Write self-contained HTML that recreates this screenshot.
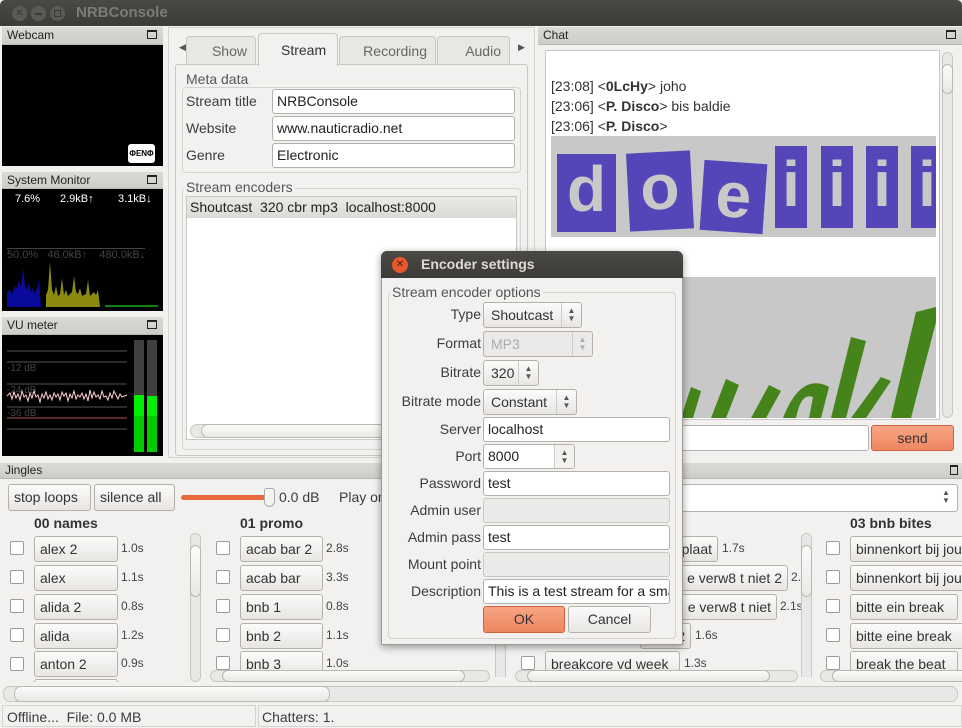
<!DOCTYPE html>
<html><head><meta charset="utf-8"><style>
*{box-sizing:border-box;margin:0;padding:0}
body{width:962px;height:728px;overflow:hidden;background:#f2f1f0;font-family:"Liberation Sans","DejaVu Sans",sans-serif;font-size:14px;color:#3c3c3c;position:relative}
.a{position:absolute}
.hdr{position:absolute;background:linear-gradient(#dcdad6,#cfcdc9);font-size:12px;color:#222;padding:1px 5px;border-bottom:1px solid #b9b7b3}
.hdr i{position:absolute;right:6px;top:3px;width:10px;height:9px;border:1px solid #222;border-top-width:2px}
.blk{position:absolute;background:#000}
.ent{position:absolute;background:#fff;border:1px solid #b4b1ac;border-radius:3px;padding:3px 4px;font-size:14px;color:#222;white-space:nowrap;overflow:hidden;height:25px}
.dis{background:#ebeae8;border-color:#c9c7c3}
.btn{position:absolute;background:linear-gradient(#fbfbfa,#e8e6e3);border:1px solid #b4b1ac;border-radius:3px;font-size:14px;color:#333;white-space:nowrap;overflow:hidden;padding:4px 5px;height:26px}
.lbl{position:absolute;font-size:14px;color:#3c3c3c;text-align:right;white-space:nowrap}
.cb{position:absolute;width:14px;height:14px;border:1px solid #9e9b97;border-radius:2px;background:#fff}
.t{position:absolute;font-size:12px;color:#444}
.sp{position:absolute;right:0;top:0;bottom:0;width:20px;border-left:1px solid #ccc;font-size:8px;line-height:8px;text-align:center;color:#555;padding-top:4px}
.vs{position:absolute;width:11px;border:1px solid #c9c7c3;border-radius:6px;background:#e9e8e6}
.hs{position:absolute;height:12px;border:1px solid #c9c7c3;border-radius:7px;background:#e9e8e6}
.thumb{position:absolute;border:1px solid #b9b7b3;border-radius:7px;background:linear-gradient(#fbfbfa,#eae8e5)}
.tab{position:absolute;top:36px;height:29px;border:1px solid #c9c7c3;border-radius:4px 4px 0 0;background:#e8e7e4;text-align:right;padding:6px 8px 0 0;color:#666}
</style></head><body>
<!-- title bar -->
<div class="a" style="left:0;top:0;width:962px;height:26px;background:linear-gradient(#4a4945,#3c3b37);border-radius:5px 5px 0 0"></div>
<div class="a" style="left:12px;top:6px;width:15px;height:15px;border-radius:50%;background:#5b5a55;color:#3a3935;font-size:10px;text-align:center;line-height:15px">✕</div>
<div class="a" style="left:31px;top:6px;width:15px;height:15px;border-radius:50%;background:#5b5a55"></div>
<div class="a" style="left:35px;top:13px;width:7px;height:2px;background:#3a3935"></div>
<div class="a" style="left:50px;top:6px;width:15px;height:15px;border-radius:50%;background:#5b5a55"></div>
<div class="a" style="left:54px;top:10px;width:7px;height:7px;border:1px solid #3a3935"></div>
<div class="a" style="left:76px;top:4px;font-size:15px;font-weight:bold;color:#7d7b75">NRBConsole</div>

<!-- left column -->
<div class="hdr" style="left:2px;top:27px;width:161px;height:18px">Webcam<i></i></div>
<div class="blk" style="left:2px;top:45px;width:161px;height:121px"></div>
<div class="a" style="left:128px;top:144px;width:27px;height:19px;background:#fff;border-radius:3px;font-size:8px;color:#000;text-align:center;line-height:19px;font-weight:bold">ΦENΦ</div>
<div class="hdr" style="left:2px;top:172px;width:161px;height:17px">System Monitor<i></i></div>
<div class="blk" style="left:2px;top:189px;width:161px;height:122px"></div>
<div class="a" style="left:15px;top:193px;font-size:11px;color:#fff">7.6%</div>
<div class="a" style="left:60px;top:193px;font-size:11px;color:#fff">2.9kB↑</div>
<div class="a" style="left:118px;top:193px;font-size:11px;color:#fff">3.1kB↓</div>
<div class="a" style="left:7px;top:248px;font-size:11px;color:#444;border-top:1px solid #444">50.0%&nbsp;&nbsp; 48.0kB↑&nbsp;&nbsp;&nbsp; 480.0kB↓</div>
<svg class="a" style="left:2px;top:250px" width="161" height="62">
<path d="M5 57 L5 42 L8 40 L10 44 L13 36 L15 38 L17 30 L19 38 L21 18 L23 35 L25 40 L27 33 L29 42 L31 38 L33 44 L35 38 L37 30 L39 57Z" fill="#0a0a9a"/>
<path d="M44 57 L44 45 L46 40 L48 12 L50 40 L52 45 L54 36 L56 46 L58 44 L60 28 L62 45 L64 40 L66 46 L70 42 L72 26 L74 42 L76 44 L78 38 L80 46 L84 44 L86 30 L88 46 L92 42 L94 45 L96 40 L98 57Z" fill="#8a8a10"/>
<rect x="103" y="55" width="53" height="2" fill="#108010"/>
</svg>
<div class="hdr" style="left:2px;top:317px;width:161px;height:18px">VU meter<i></i></div>
<div class="blk" style="left:2px;top:335px;width:161px;height:121px"></div>
<svg class="a" style="left:2px;top:335px" width="161" height="121">
<g stroke="#555" stroke-width="1"><line x1="5" y1="16" x2="125" y2="16"/><line x1="5" y1="27" x2="125" y2="27"/><line x1="5" y1="49" x2="125" y2="49"/><line x1="5" y1="72" x2="125" y2="72"/><line x1="5" y1="94" x2="125" y2="94"/></g>
<g font-size="10" fill="#444" font-family="Liberation Sans"><text x="5" y="36">-12 dB</text><text x="5" y="58">-24 dB</text><text x="5" y="81">-36 dB</text></g>
<path d="M5 61 L8 58 L10 64 L12 57 L14 63 L16 59 L18 65 L20 56 L22 62 L24 60 L26 66 L28 58 L30 63 L32 56 L34 62 L36 60 L38 67 L40 59 L42 63 L44 57 L46 64 L48 60 L50 65 L52 58 L54 62 L56 59 L58 65 L60 57 L62 61 L64 58 L66 66 L68 59 L70 63 L72 56 L74 64 L76 60 L78 62 L80 58 L82 64 L84 59 L86 66 L88 55 L90 63 L92 57 L94 62 L96 60 L98 64 L100 56 L102 62 L104 61 L106 65 L108 58 L110 63 L112 56 L114 60 L116 64 L118 59 L120 62 L125 60" stroke="#ffd0d0" fill="none" stroke-width="1"/>
<line x1="5" y1="83" x2="125" y2="83" stroke="#b05050"/>
<rect x="132" y="5" width="10" height="112" fill="#404040"/><rect x="145" y="5" width="10" height="112" fill="#404040"/>
<rect x="132" y="60" width="10" height="57" fill="#00cc00"/><rect x="132" y="60" width="10" height="21" fill="#00ee00"/>
<rect x="145" y="61" width="10" height="56" fill="#00cc00"/><rect x="145" y="61" width="10" height="20" fill="#00ee00"/>
</svg>

<!-- middle panel -->
<div class="a" style="left:168px;top:27px;width:367px;height:431px;border:1px solid #d5d3cf;background:#f2f1f0"></div>
<div class="a" style="left:179px;top:42px;font-size:9px;color:#555">◀</div>
<div class="a" style="left:518px;top:42px;font-size:9px;color:#555">▶</div>
<div class="tab" style="left:186px;width:70px">Show</div>
<div class="tab" style="left:339px;width:97px">Recording</div>
<div class="tab" style="left:437px;width:73px">Audio</div>
<div class="a" style="left:175px;top:64px;width:353px;height:392px;border:1px solid #c9c7c3;border-radius:3px;background:#f2f1f0"></div>
<div class="a" style="left:258px;top:33px;width:80px;height:33px;border:1px solid #c9c7c3;border-bottom:none;border-radius:4px 4px 0 0;background:#f2f1f0;padding:8px 0 0 22px;color:#333">Stream</div>
<div class="a" style="left:182px;top:87px;width:339px;height:86px;border:1px solid #d5d3cf;border-radius:4px"></div>
<div class="a" style="left:184px;top:71px;background:#f2f1f0;padding:0 2px;color:#555">Meta data</div>
<div class="lbl" style="left:186px;top:93px">Stream title</div>
<div class="lbl" style="left:186px;top:120px">Website</div>
<div class="lbl" style="left:186px;top:147px">Genre</div>
<div class="ent" style="left:272px;top:89px;width:243px;height:25px">NRBConsole</div>
<div class="ent" style="left:272px;top:116px;width:243px;height:25px">www.nauticradio.net</div>
<div class="ent" style="left:272px;top:143px;width:243px;height:25px">Electronic</div>
<div class="a" style="left:182px;top:188px;width:339px;height:262px;border:1px solid #d5d3cf;border-radius:4px"></div>
<div class="a" style="left:184px;top:179px;background:#f2f1f0;padding:0 2px;color:#555">Stream encoders</div>
<div class="a" style="left:186px;top:196px;width:331px;height:244px;background:#fff;border:1px solid #c9c7c3"></div>
<div class="a" style="left:187px;top:197px;width:329px;height:21px;background:linear-gradient(#eceae7,#dcdad6);padding:2px 3px;color:#222">Shoutcast&nbsp; 320 cbr mp3&nbsp; localhost:8000</div>
<div class="hs" style="left:190px;top:424px;width:325px;height:14px"></div>
<div class="thumb" style="left:201px;top:424px;width:314px;height:14px"></div>

<!-- chat -->
<div class="hdr" style="left:538px;top:27px;width:424px;height:18px">Chat<i></i></div>
<div class="a" style="left:545px;top:50px;width:395px;height:370px;background:#fff;border:1px solid #c9c7c3"></div>
<div class="a" style="left:551px;top:76px;line-height:20px;color:#333">[23:08] &lt;<b>0LcHy</b>&gt; joho<br>[23:06] &lt;<b>P. Disco</b>&gt; bis baldie<br>[23:06] &lt;<b>P. Disco</b>&gt;</div>
<div class="a" style="left:551px;top:136px;width:385px;height:101px;background:#c8c8c8;overflow:hidden">
<div class="a" style="left:6px;top:18px;width:59px;height:78px;background:#5446b8;color:#c8c8c8;font-size:64px;line-height:70px;text-align:center;font-weight:bold">d</div>
<div class="a" style="left:77px;top:16px;width:64px;height:78px;background:#5446b8;color:#c8c8c8;font-size:64px;line-height:70px;text-align:center;font-weight:bold;transform:rotate(-3deg)">o</div>
<div class="a" style="left:151px;top:26px;width:63px;height:70px;background:#5446b8;color:#c8c8c8;font-size:64px;line-height:66px;text-align:center;font-weight:bold;transform:rotate(4deg)">e</div>
<div class="a" style="left:224px;top:10px;width:32px;height:82px;background:#5446b8;color:#c8c8c8;font-size:64px;line-height:76px;text-align:center;font-weight:bold">i</div>
<div class="a" style="left:270px;top:10px;width:32px;height:82px;background:#5446b8;color:#c8c8c8;font-size:64px;line-height:76px;text-align:center;font-weight:bold">i</div>
<div class="a" style="left:315px;top:10px;width:32px;height:82px;background:#5446b8;color:#c8c8c8;font-size:64px;line-height:76px;text-align:center;font-weight:bold">i</div>
<div class="a" style="left:360px;top:10px;width:32px;height:82px;background:#5446b8;color:#c8c8c8;font-size:64px;line-height:76px;text-align:center;font-weight:bold">i</div>
</div>
<div class="a" style="left:551px;top:277px;width:385px;height:141px;background:#c8c8c8;overflow:hidden">
<svg width="385" height="141"><g fill="#45841a"><path d="M130 141 L140 110 L150 114 L142 141Z"/><path d="M160 141 L175 102 L188 108 L175 141Z"/><path d="M200 141 L218 108 L230 114 L215 141Z"/><path d="M232 141 Q250 95 278 110 L270 141 L258 141 L262 120 Q250 115 245 141Z"/><path d="M280 141 L300 60 L315 64 L295 141Z"/><path d="M300 141 L330 100 L340 104 L315 141Z"/><path d="M340 141 L365 35 L385 30 L385 45 L360 141Z"/></g></svg>
</div>
<div class="vs" style="left:942px;top:52px;height:366px"></div>
<div class="thumb" style="left:942px;top:64px;width:11px;height:30px"></div>
<div class="ent" style="left:680px;top:425px;width:189px;height:26px"></div>
<div class="a" style="left:871px;top:425px;width:83px;height:26px;border:1px solid #d06040;border-radius:3px;background:linear-gradient(#f7a584,#ee8660);text-align:center;line-height:24px;color:#333">send</div>

<!-- jingles -->
<div class="hdr" style="left:0;top:463px;width:962px;height:16px;font-size:12px;padding-top:0">Jingles<i style="right:4px;top:2px;width:8px;height:10px"></i></div>
<div class="btn" style="left:8px;top:484px;width:83px;height:27px">stop loops</div>
<div class="btn" style="left:94px;top:484px;width:81px;height:27px">silence all</div>
<div class="a" style="left:181px;top:495px;width:90px;height:5px;background:#e96a3a;border-radius:3px"></div>
<div class="a" style="left:264px;top:488px;width:11px;height:19px;border:1px solid #aaa;border-radius:3px 3px 6px 6px;background:#f4f3f1"></div>
<div class="a" style="left:279px;top:489px">0.0 dB</div>
<div class="a" style="left:339px;top:489px">Play on</div>
<div class="ent" style="left:640px;top:484px;width:318px;height:28px"></div>
<div class="a" style="left:942px;top:489px;font-size:8px;line-height:8px;color:#555">▲<br>▼</div>
<div class="a" style="left:34px;top:515px;font-weight:bold;color:#333">00 names</div>
<div class="a" style="left:240px;top:515px;font-weight:bold;color:#333">01 promo</div>
<div class="a" style="left:850px;top:515px;font-weight:bold;color:#333">03 bnb bites</div>
<!-- col0 -->
<div class="cb" style="left:10px;top:541px"></div><div class="btn" style="left:34px;top:536px;width:84px">alex 2</div><div class="t" style="left:121px;top:541px">1.0s</div>
<div class="cb" style="left:10px;top:570px"></div><div class="btn" style="left:34px;top:565px;width:84px">alex</div><div class="t" style="left:121px;top:570px">1.1s</div>
<div class="cb" style="left:10px;top:599px"></div><div class="btn" style="left:34px;top:594px;width:84px">alida 2</div><div class="t" style="left:121px;top:599px">0.8s</div>
<div class="cb" style="left:10px;top:628px"></div><div class="btn" style="left:34px;top:623px;width:84px">alida</div><div class="t" style="left:121px;top:628px">1.2s</div>
<div class="cb" style="left:10px;top:657px"></div><div class="btn" style="left:34px;top:651px;width:84px">anton 2</div><div class="t" style="left:121px;top:656px">0.9s</div>
<div class="btn" style="left:34px;top:679px;width:84px;height:6px;padding:0"></div>
<div class="vs" style="left:190px;top:533px;height:149px"></div><div class="thumb" style="left:190px;top:545px;width:11px;height:52px"></div>
<!-- col1 -->
<div class="cb" style="left:216px;top:541px"></div><div class="btn" style="left:240px;top:536px;width:83px">acab bar 2</div><div class="t" style="left:326px;top:541px">2.8s</div>
<div class="cb" style="left:216px;top:570px"></div><div class="btn" style="left:240px;top:565px;width:83px">acab bar</div><div class="t" style="left:326px;top:570px">3.3s</div>
<div class="cb" style="left:216px;top:599px"></div><div class="btn" style="left:240px;top:594px;width:83px">bnb 1</div><div class="t" style="left:326px;top:599px">0.8s</div>
<div class="cb" style="left:216px;top:628px"></div><div class="btn" style="left:240px;top:623px;width:83px">bnb 2</div><div class="t" style="left:326px;top:628px">1.1s</div>
<div class="cb" style="left:216px;top:656px"></div><div class="btn" style="left:240px;top:651px;width:83px">bnb 3</div><div class="t" style="left:326px;top:656px">1.0s</div>
<div class="vs" style="left:495px;top:533px;height:149px"></div>
<!-- col2 -->
<div class="btn" style="left:640px;top:536px;width:78px;text-align:right">plaat</div><div class="t" style="left:722px;top:541px">1.7s</div>
<div class="btn" style="left:640px;top:565px;width:148px;text-align:right">e verw8 t niet 2</div><div class="t" style="left:791px;top:570px">2.</div>
<div class="btn" style="left:640px;top:594px;width:137px;text-align:right">e verw8 t niet</div><div class="t" style="left:780px;top:599px">2.1s</div>
<div class="btn" style="left:640px;top:623px;width:51px;text-align:right">2</div><div class="t" style="left:695px;top:628px">1.6s</div>
<div class="cb" style="left:521px;top:656px"></div><div class="btn" style="left:545px;top:651px;width:135px">breakcore vd week</div><div class="t" style="left:684px;top:656px">1.3s</div>
<div class="vs" style="left:801px;top:533px;height:149px"></div><div class="thumb" style="left:801px;top:545px;width:11px;height:52px"></div>
<!-- col3 -->
<div class="cb" style="left:826px;top:541px"></div><div class="btn" style="left:850px;top:536px;width:120px">binnenkort bij jou</div>
<div class="cb" style="left:826px;top:570px"></div><div class="btn" style="left:850px;top:565px;width:120px">binnenkort bij jou</div>
<div class="cb" style="left:826px;top:599px"></div><div class="btn" style="left:850px;top:594px;width:108px">bitte ein break</div>
<div class="cb" style="left:826px;top:628px"></div><div class="btn" style="left:850px;top:623px;width:120px">bitte eine break</div>
<div class="cb" style="left:826px;top:656px"></div><div class="btn" style="left:850px;top:651px;width:108px">break the beat</div>
<!-- h scrollbars -->
<div class="a" style="left:0;top:682px;width:962px;height:5px;background:#f2f1f0"></div>
<div class="a" style="left:208px;top:677px;width:754px;height:5px;background:#f2f1f0"></div>
<div class="hs" style="left:210px;top:670px;width:280px"></div><div class="thumb" style="left:222px;top:670px;width:243px;height:12px"></div>
<div class="hs" style="left:515px;top:670px;width:283px"></div><div class="thumb" style="left:527px;top:670px;width:243px;height:12px"></div>
<div class="hs" style="left:820px;top:670px;width:150px"></div><div class="thumb" style="left:832px;top:670px;width:140px;height:12px"></div>
<div class="hs" style="left:3px;top:686px;width:955px;height:16px"></div><div class="thumb" style="left:14px;top:686px;width:316px;height:16px"></div>
<!-- status -->
<div class="a" style="left:2px;top:705px;width:254px;height:22px;border:1px solid #d5d3cf;padding:3px 4px">Offline...&nbsp; File: 0.0 MB</div>
<div class="a" style="left:258px;top:705px;width:704px;height:22px;border:1px solid #d5d3cf;padding:3px 3px">Chatters: 1.</div>

<!-- dialog -->
<div class="a" style="left:381px;top:251px;width:302px;height:394px;background:#f2f1f0;border:1px solid #9e9b97;border-radius:6px 6px 0 0;box-shadow:0 2px 8px rgba(0,0,0,.4)"></div>
<div class="a" style="left:381px;top:251px;width:302px;height:27px;background:linear-gradient(#4a4945,#3c3b37);border-radius:6px 6px 0 0"></div>
<div class="a" style="left:392px;top:257px;width:16px;height:16px;border-radius:50%;background:#e8572b;color:#4a2010;font-size:10px;text-align:center;line-height:16px">✕</div>
<div class="a" style="left:421px;top:256px;font-size:14px;font-weight:bold;color:#dfdbd2">Encoder settings</div>
<div class="a" style="left:388px;top:292px;width:288px;height:347px;border:1px solid #d5d3cf;border-radius:4px"></div>
<div class="a" style="left:390px;top:284px;background:#f2f1f0;padding:0 2px;color:#555">Stream encoder options</div>
<div class="lbl" style="right:481px;top:306px">Type</div>
<div class="lbl" style="right:481px;top:335px">Format</div>
<div class="lbl" style="right:481px;top:364px">Bitrate</div>
<div class="lbl" style="right:481px;top:393px">Bitrate mode</div>
<div class="lbl" style="right:481px;top:421px">Server</div>
<div class="lbl" style="right:481px;top:448px">Port</div>
<div class="lbl" style="right:481px;top:475px">Password</div>
<div class="lbl" style="right:481px;top:502px">Admin user</div>
<div class="lbl" style="right:481px;top:529px">Admin pass</div>
<div class="lbl" style="right:481px;top:556px">Mount point</div>
<div class="lbl" style="right:481px;top:583px">Description</div>
<div class="btn" style="left:483px;top:302px;width:99px;height:26px;padding-left:7px">Shoutcast<span class="sp">▲<br>▼</span></div>
<div class="btn" style="left:483px;top:331px;width:110px;height:26px;padding-left:7px;color:#aaa;background:#ebeae8">MP3<span class="sp" style="color:#aaa">▲<br>▼</span></div>
<div class="btn" style="left:483px;top:360px;width:56px;height:26px;padding-left:7px">320<span class="sp">▲<br>▼</span></div>
<div class="btn" style="left:483px;top:389px;width:94px;height:26px;padding-left:7px">Constant<span class="sp">▲<br>▼</span></div>
<div class="ent" style="left:483px;top:417px;width:187px;height:25px">localhost</div>
<div class="ent" style="left:483px;top:444px;width:92px;height:25px">8000<span class="sp" style="background:#f2f1f0">▲<br>▼</span></div>
<div class="ent" style="left:483px;top:471px;width:187px;height:25px">test</div>
<div class="ent dis" style="left:483px;top:498px;width:187px;height:25px"></div>
<div class="ent" style="left:483px;top:525px;width:187px;height:25px">test</div>
<div class="ent dis" style="left:483px;top:552px;width:187px;height:25px"></div>
<div class="ent" style="left:483px;top:579px;width:187px;height:25px">This is a test stream for a small</div>
<div class="a" style="left:483px;top:606px;width:82px;height:27px;border:1px solid #d06040;border-radius:3px;background:linear-gradient(#f7a584,#ee8660);text-align:center;line-height:25px;color:#333">OK</div>
<div class="btn" style="left:568px;top:606px;width:83px;height:27px;text-align:center">Cancel</div>
</body></html>
